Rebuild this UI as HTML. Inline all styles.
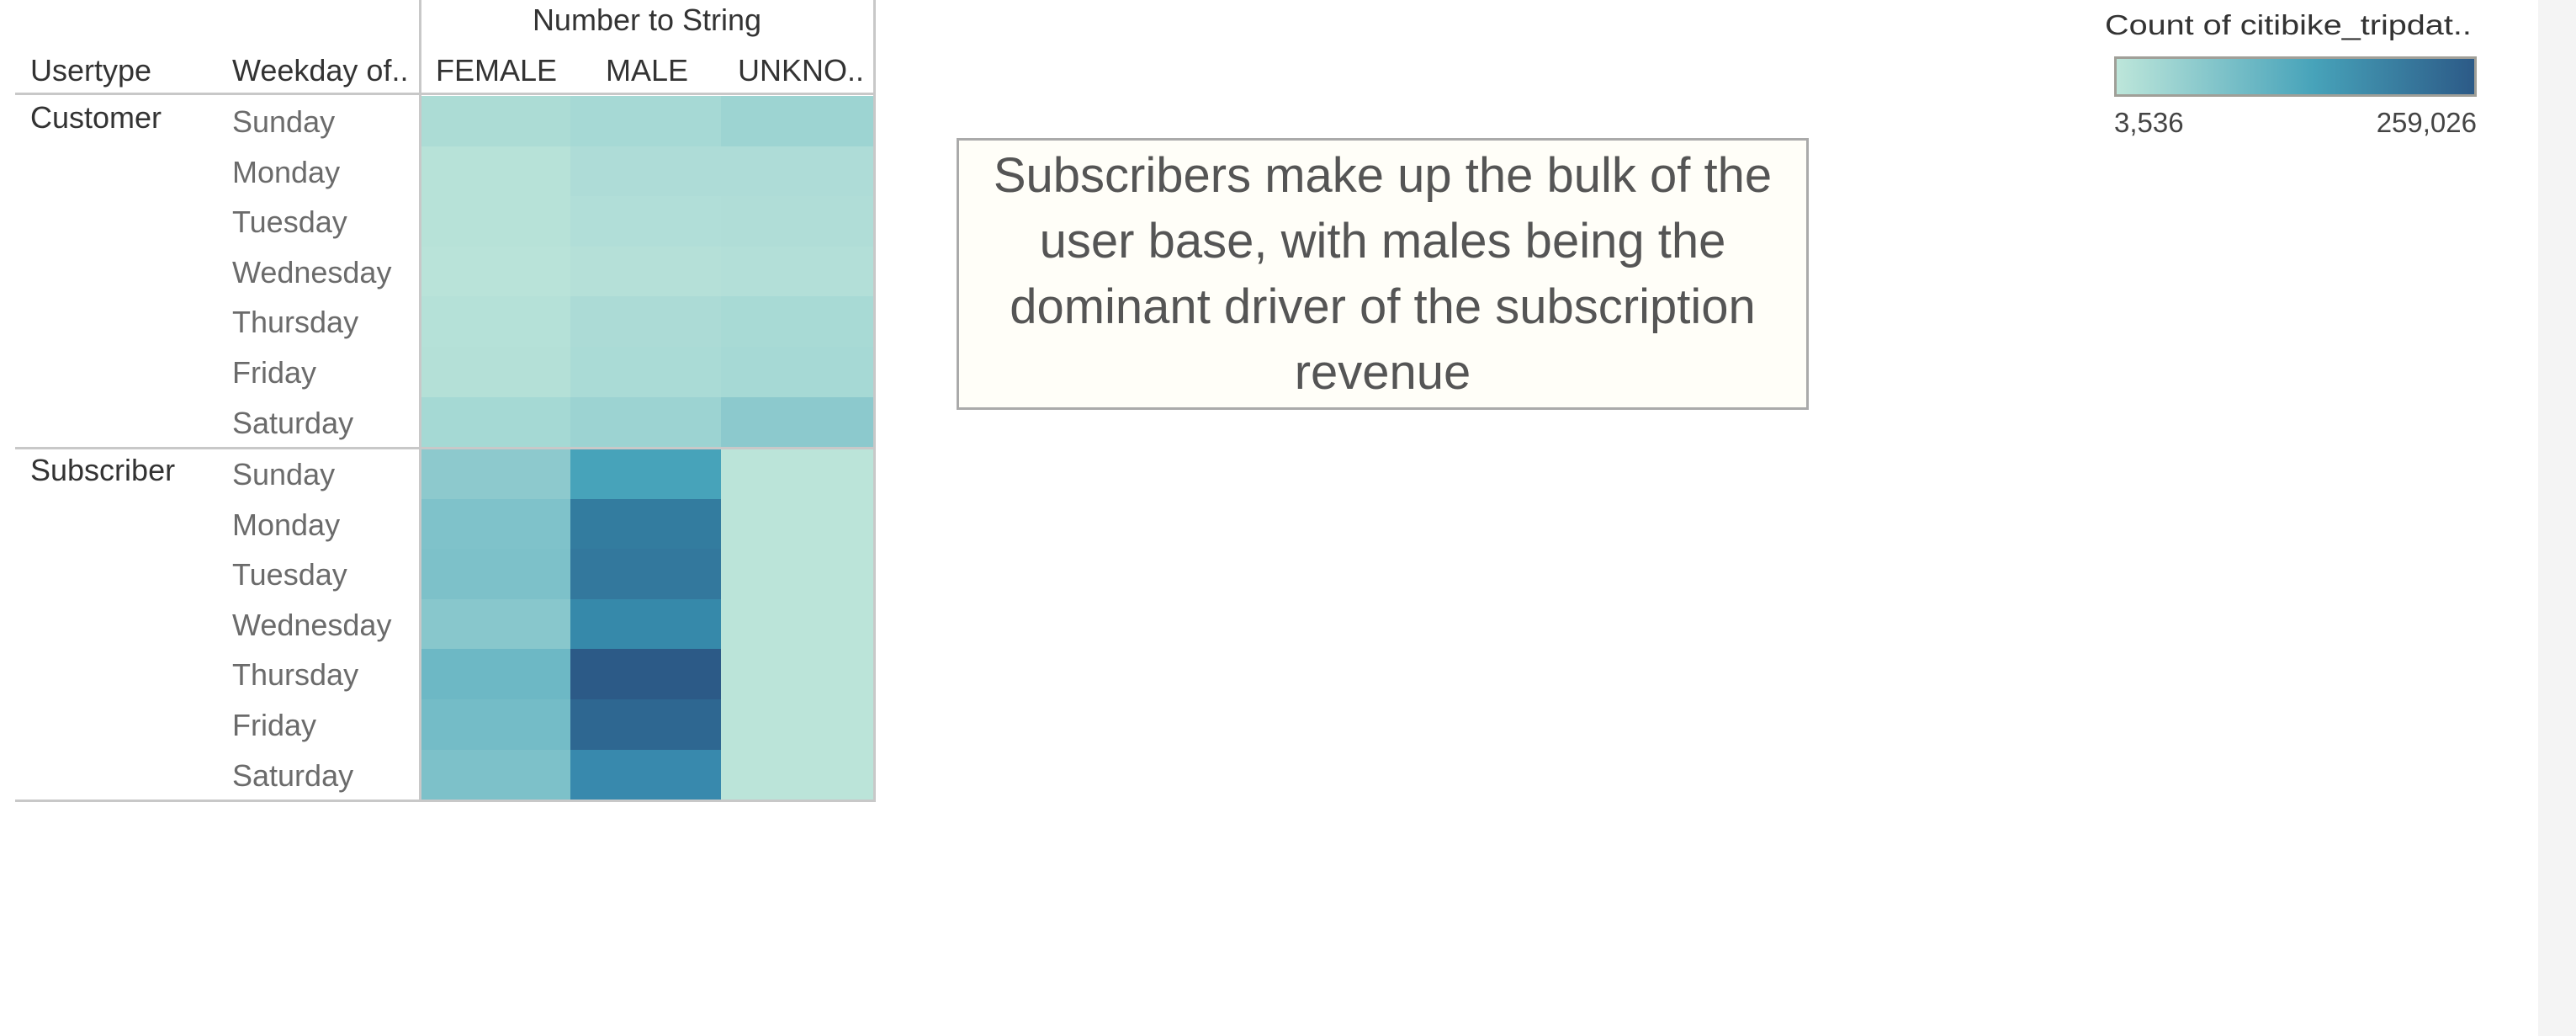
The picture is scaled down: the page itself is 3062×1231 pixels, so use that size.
<!DOCTYPE html>
<html><head><meta charset="utf-8"><style>
*{margin:0;padding:0;box-sizing:border-box}
body{width:3062px;height:1231px;background:#fff;position:relative;overflow:hidden;font-family:"Liberation Sans",sans-serif}
.a{position:absolute;white-space:nowrap}
.h{color:#333;font-size:36px;line-height:40px}
.w{color:#6b6b6b;font-size:36px;line-height:40px}
.c{position:absolute;height:60px}
</style></head><body>
<div class="a" style="left:3017px;top:0;width:45px;height:1231px;background:#f4f4f4"></div>

<div class="a h" style="left:500px;width:538px;top:4px;text-align:center">Number to String</div>
<div class="a h" style="left:36px;top:64px">Usertype</div>
<div class="a h" style="left:276px;top:64px">Weekday of..</div>
<div class="a h" style="left:518px;top:64px">FEMALE</div>
<div class="a h" style="left:720px;top:64px">MALE</div>
<div class="a h" style="left:877px;top:64px">UNKNO..</div>

<div id="cells"></div>
<script>
(function(){
var rows=[["#acdcd5","#a6d9d5","#9dd4d2"],["#b7e2d8","#aedcd7","#aedcd7"],["#b7e2d8","#b1ded8","#b0ddd7"],["#b9e3d9","#b5e0d8","#b3dfd8"],["#b5e1d8","#acdbd6","#a8dad5"],["#b4e0d7","#aadbd6","#a6d9d5"],["#a5d9d4","#9cd3d2","#8cc9cd"],
["#8dc9cd","#47a3ba","#bbe4d9"],["#7fc2ca","#337c9f","#bbe4d9"],["#7dc1c9","#33789d","#bbe4d9"],["#88c7cc","#3689aa","#bbe4d9"],["#6db8c5","#2c5a87","#bbe4d9"],["#74bcc7","#2e6791","#bbe4d9"],["#7dc1c9","#3889ad","#bbe4d9"]];
var days=["Sunday","Monday","Tuesday","Wednesday","Thursday","Friday","Saturday"];
var xs=[501,678,857,1038],h="";
for(var i=0;i<14;i++){var y=(i<7?114:533)+(i%7)*59.6;
for(var j=0;j<3;j++)h+='<div class="c" style="left:'+xs[j]+'px;width:'+(xs[j+1]-xs[j])+'px;top:'+y+'px;height:60.6px;background:'+rows[i][j]+'"></div>';
h+='<div class="a w" style="left:276px;top:'+(y+11)+'px">'+days[i%7]+'</div>';}
document.getElementById('cells').innerHTML=h;
})();
</script>
<div class="a h" style="left:36px;top:120px">Customer</div>
<div class="a h" style="left:36px;top:539px">Subscriber</div>

<div class="a" style="left:18px;top:110px;width:1023px;height:3px;background:#c8c8c8"></div>
<div class="a" style="left:18px;top:531px;width:1023px;height:3px;background:#c8c8c8"></div>
<div class="a" style="left:18px;top:950px;width:1023px;height:3px;background:#c8c8c8"></div>
<div class="a" style="left:498px;top:0;width:3px;height:953px;background:#c8c8c8"></div>
<div class="a" style="left:1038px;top:0;width:3px;height:953px;background:#c8c8c8"></div>

<div class="a" style="left:1137px;top:164px;width:1013px;height:323px;background:#fffef8;border:3px solid #aaa"></div>
<div class="a" style="left:1137px;top:170px;width:1013px;text-align:center;color:#555;font-size:58px;line-height:78px;white-space:normal">Subscribers make up the bulk of the<br>user base, with males being the<br>dominant driver of the subscription<br>revenue</div>

<div class="a" style="left:2502px;top:10px;color:#333;font-size:33px;line-height:40px;transform:scaleX(1.2);transform-origin:0 0">Count of citibike_tripdat..</div>
<div class="a" style="left:2513px;top:67px;width:431px;height:48px;border:3px solid #a09f98;background:linear-gradient(to right,#bde6da,#47a3ba 55%,#2c5a87)"></div>
<div class="a" style="left:2513px;top:126px;color:#444;font-size:33px;line-height:40px">3,536</div>
<div class="a" style="left:2744px;width:200px;text-align:right;top:126px;color:#444;font-size:33px;line-height:40px">259,026</div>
</body></html>
